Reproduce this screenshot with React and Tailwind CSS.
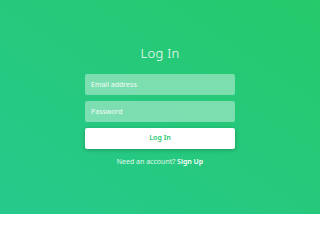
export default function App() {
  return (
    <div
      className="w-[320px] h-[214px] flex flex-col items-center bg-gradient-to-tr from-[#27c98c] to-[#25c96a] text-white"
      style={{ fontFamily: '"Noto Sans", Lato, sans-serif' }}
    >
      <h1 className="mt-[43px] text-[13px] leading-[20px] font-light tracking-[0.3px]">Log In</h1>
      <form className="mt-[11px] w-[150px] flex flex-col gap-[6px]">
        <input
          className="h-[21px] px-[6px] rounded-[2px] bg-white/40 text-[7px] text-white placeholder-white/90 outline-none"
          placeholder="Email address"
        />
        <input
          type="password"
          className="h-[21px] px-[6px] rounded-[2px] bg-white/40 text-[7px] text-white placeholder-white/90 outline-none"
          placeholder="Password"
        />
        <button
          type="button"
          className="h-[21px] rounded-[2px] bg-white text-[#26c96e] text-[7px] font-semibold shadow-[0_1px_4px_rgba(0,0,0,0.25)]"
        >
          Log In
        </button>
      </form>
      <p className="mt-[8px] text-[7px] leading-[10px] text-white/85">
        Need an account? <span className="font-semibold text-white">Sign Up</span>
      </p>
    </div>
  );
}
